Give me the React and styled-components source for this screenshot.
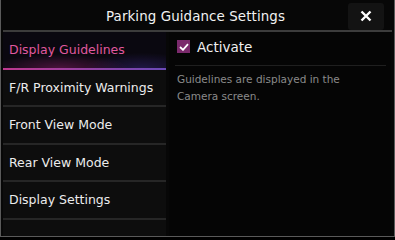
import React from 'react'
import styled, { createGlobalStyle } from "styled-components";

const Global = createGlobalStyle`
  html, body {
    margin: 0;
    background: #000;
  }
  body {
    font-family: "DejaVu Sans", "Noto Sans", sans-serif;
  }
`;

const Frame = styled.div`
  width: 395px;
  height: 237px;
  box-sizing: border-box;
  background: #070707;
  border: 1px solid #5a5a5a;
  border-top: none;
  display: flex;
  flex-direction: column;
  overflow: hidden;
`;

const Header = styled.div`
  height: 30px;
  margin: 0 2px;
  border-bottom: 2px solid #3c3c3c;
  display: grid;
  grid-template-columns: 1fr auto;
  align-items: center;
`;

const Title = styled.div`
  color: #f2f2f2;
  font-size: 13.4px;
  text-align: center;
  padding-left: 40px;
  letter-spacing: 0.1px;
  margin-top: 2px;
`;

const Close = styled.button`
  width: 36px;
  height: 27px;
  margin: 2px 8px 0 0;
  border: none;
  border-radius: 3px;
  background: #131313;
  display: flex;
  align-items: center;
  justify-content: center;
  padding: 0;
`;

const Body = styled.div`
  flex: 1;
  display: grid;
  grid-template-columns: 163px 1fr;
  column-gap: 3px;
  padding: 0 3px 0 2px;
`;

const Sidebar = styled.div`
  background: #0d0d0d;
  display: flex;
  flex-direction: column;
`;

const Item = styled.div`
  height: 37.5px;
  box-sizing: border-box;
  display: flex;
  align-items: center;
  padding-left: 6px;
  font-size: 12.5px;
  color: ${p => (p.$active ? "#e0589f" : "#ececec")};
  border-bottom: 2px solid ${p => (p.$active ? "transparent" : "#262626")};
  ${p =>
    p.$active &&
    `
    background:
      radial-gradient(ellipse 60% 55% at 35% 100%, rgba(190,40,140,0.35), transparent 70%),
      radial-gradient(ellipse 50% 60% at 85% 100%, rgba(70,50,160,0.35), transparent 70%),
      #0a0810;
    border-image: linear-gradient(to right, #c0388f, #6a4ab8) 1;
  `}
`;

const Panel = styled.div`
  background: #050505;
  padding: 0 5px 0 6px;
`;

const CheckRow = styled.div`
  height: 34px;
  box-sizing: border-box;
  padding: 0 0 4px 2px;
  display: flex;
  align-items: center;
  gap: 7px;
  border-bottom: 1px solid #1f1f1f;
`;

const Box = styled.span`
  width: 13px;
  height: 13px;
  background: #7b2a6c;
  display: flex;
  align-items: center;
  justify-content: center;
`;

const Label = styled.span`
  color: #f0f0f0;
  font-size: 13.5px;
`;

const Desc = styled.p`
  margin: 5px 0 0 2px;
  color: #8a8a8a;
  font-size: 10.5px;
  line-height: 17px;
`;

const items = [
  "Display Guidelines",
  "F/R Proximity Warnings",
  "Front View Mode",
  "Rear View Mode",
  "Display Settings",
];

export default function App() {
  return (
    <>
      <Global />
      <Frame>
        <Header>
          <Title>Parking Guidance Settings</Title>
          <Close>
            <svg width="12" height="12" viewBox="0 0 12 12">
              <path d="M1.5 1.5 L10.5 10.5 M10.5 1.5 L1.5 10.5" stroke="#fff" strokeWidth="2.4" />
            </svg>
          </Close>
        </Header>
        <Body>
          <Sidebar>
            {items.map((t, i) => (
              <Item key={t} $active={i === 0}>{t}</Item>
            ))}
          </Sidebar>
          <Panel>
            <CheckRow>
              <Box>
                <svg width="10" height="8" viewBox="0 0 10 8">
                  <path d="M1 4 L4 6.8 L9 1.2" stroke="#fff" strokeWidth="1.8" fill="none" />
                </svg>
              </Box>
              <Label>Activate</Label>
            </CheckRow>
            <Desc>
              Guidelines are displayed in the
              <br />
              Camera screen.
            </Desc>
          </Panel>
        </Body>
      </Frame>
    </>
  )
}
